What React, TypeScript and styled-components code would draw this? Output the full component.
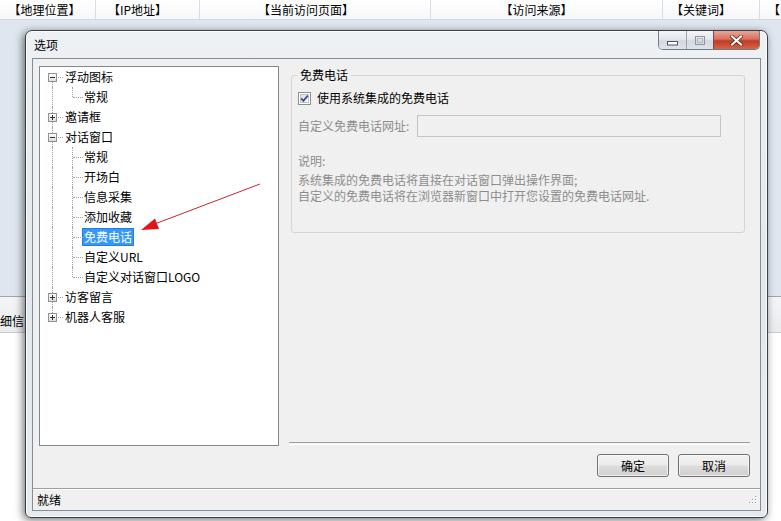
import React from 'react';
import styled, { createGlobalStyle } from 'styled-components';

const GlobalStyle = createGlobalStyle`
  html, body { margin: 0; padding: 0; }
  body {
    font-family: "Noto Sans CJK SC", "Noto Sans", sans-serif;
    font-size: 12px;
    color: #000;
    overflow: hidden;
  }
`;

const Page = styled.div`
  position: relative;
  width: 781px;
  height: 521px;
  overflow: hidden;
  display: flex;
  flex-direction: column;
  background: #fff;
`;

// ---- application behind the dialog ----
const HeaderRow = styled.div`
  display: grid;
  grid-template-columns: 96px 104px 231px 232px 97px 1fr;
  height: 20px;
  flex: none;
  background: linear-gradient(#ffffff, #f6f7f9);
  border-bottom: 1px solid #d3d8df;
  box-sizing: border-box;
`;

const HeaderCell = styled.div<{ $pr: number }>`
  line-height: 19px;
  text-align: center;
  white-space: nowrap;
  overflow: hidden;
  padding-right: ${(p) => p.$pr}px;
  border-right: 1px solid #dadde2;
`;

const LastHeaderCell = styled(HeaderCell)`
  text-align: left;
  padding-left: 8px;
  border-right: none;
`;

const ListArea = styled.div`
  height: 276px;
  flex: none;
  background: #dfe6ef;
  border-bottom: 1px solid #9ea6b0;
`;

const TabStrip = styled.div`
  height: 35px;
  flex: none;
  background: linear-gradient(#f4f5f7, #e9ebee);
  border-bottom: 1px solid #c9ccd1;
  display: flex;
  align-items: flex-end;
`;

const TabLabel = styled.div`
  line-height: 20px;
  padding: 0 2px 1px 0;
  border-right: 1px solid #b7bcc3;
`;

// ---- dialog ----
const Frame = styled.div`
  position: absolute;
  left: 25px;
  top: 30px;
  width: 743px;
  height: 488px;
  box-sizing: border-box;
  border: 1px solid #3a3d42;
  border-radius: 7px 7px 6px 6px;
  background: linear-gradient(180deg, #eef1f4 0%, #e3e8ed 45%, #e6eaee 100%);
  box-shadow: -2px 2px 9px rgba(0, 0, 0, 0.55), inset 0 0 0 1px rgba(255, 255, 255, 0.8);
  display: flex;
  flex-direction: column;
  padding: 0 6px 6px 6px;
`;

const TitleBar = styled.div`
  height: 27px;
  flex: none;
  display: flex;
  align-items: flex-start;
`;

const Title = styled.div`
  line-height: 16px;
  padding-top: 6px;
  padding-left: 2px;
  flex: 1;
`;

const CaptionGroup = styled.div`
  display: flex;
  height: 18px;
  margin-right: 1px;
  border: 1px solid #6f7b89;
  border-top: none;
  border-radius: 0 0 5px 5px;
  overflow: hidden;
`;

const CaptionButton = styled.div<{ $w: number; $close?: boolean }>`
  width: ${(p) => p.$w}px;
  display: flex;
  align-items: center;
  justify-content: center;
  box-sizing: border-box;
  border-left: ${(p) => (p.$close ? '1px solid #7d4a44' : '1px solid #9aa4ae')};
  &:first-child { border-left: none; }
  background: ${(p) =>
    p.$close
      ? 'linear-gradient(#eaa595 0%, #d7705f 45%, #c23a24 55%, #d5644a 100%)'
      : 'linear-gradient(#f4f6f8 0%, #e3e7ec 45%, #d3d9e0 55%, #dfe4ea 100%)'};
`;

const Client = styled.div`
  flex: 1;
  display: flex;
  flex-direction: column;
  border: 1px solid #848e99;
  background: #f0f0f0;
`;

const Body = styled.div`
  flex: 1;
  display: flex;
  padding: 7px 10px 0 6px;
`;

// ---- tree ----
const Tree = styled.div`
  width: 240px;
  height: 380px;
  flex: none;
  box-sizing: border-box;
  border: 1px solid #828790;
  background: #fff;
  padding-left: 3px;
`;

const Row = styled.div`
  display: flex;
  align-items: center;
  height: 20px;
`;

type VLine = 'full' | 'top' | 'bottom' | 'none';

const Cell = styled.span<{ $v: VLine; $h?: boolean }>`
  position: relative;
  width: 20px;
  height: 20px;
  flex: none;
  &::before {
    content: '';
    position: absolute;
    left: 9px;
    top: ${(p) => (p.$v === 'bottom' ? '10px' : '0')};
    height: ${(p) => (p.$v === 'full' ? '20px' : p.$v === 'none' ? '0' : '10px')};
    border-left: 1px dotted #a0a0a0;
  }
  &::after {
    content: '';
    position: absolute;
    left: 10px;
    top: 10px;
    width: ${(p) => (p.$h ? '10px' : '0')};
    border-top: 1px dotted #a0a0a0;
  }
`;

const Expander = styled.span`
  position: absolute;
  left: 5px;
  top: 6px;
  width: 9px;
  height: 9px;
  box-sizing: border-box;
  border: 1px solid #919191;
  background: linear-gradient(#ffffff, #dcdcdc);
  z-index: 1;
`;

const Label = styled.span<{ $selected?: boolean; $child?: boolean }>`
  line-height: 16px;
  padding: 0 1px;
  margin-left: ${(p) => (p.$child ? '-1px' : '0')};
  border: 1px solid ${(p) => (p.$selected ? '#2b7bd6' : 'transparent')};
  background: ${(p) => (p.$selected ? '#3399ff' : 'transparent')};
  color: ${(p) => (p.$selected ? '#fff' : '#000')};
  white-space: nowrap;
`;

// ---- right side ----
const RightCol = styled.div`
  width: 461px;
  margin-left: 10px;
  display: flex;
  flex-direction: column;
`;

const GroupBox = styled.div`
  position: relative;
  margin: 9px 0 0 2px;
  width: 454px;
  height: 158px;
  box-sizing: border-box;
  border: 1px solid #d5d5d5;
  border-radius: 3px;
  padding: 12px 6px 0 6px;
`;

const Legend = styled.span`
  position: absolute;
  top: -9px;
  left: 5px;
  padding: 0 3px;
  line-height: 16px;
  background: #f0f0f0;
`;

const CheckRow = styled.div`
  display: flex;
  align-items: center;
  gap: 6px;
  height: 20px;
  line-height: 16px;
`;

const FieldRow = styled.div`
  display: flex;
  align-items: center;
  margin-top: 7px;
  height: 22px;
`;

const FieldLabel = styled.span`
  width: 119px;
  flex: none;
  color: #8d8d8d;
  line-height: 16px;
`;

const TextBox = styled.div`
  width: 304px;
  height: 22px;
  box-sizing: border-box;
  border: 1px solid #c2c4c8;
  background: #f0f0f0;
`;

const Note = styled.div`
  margin-top: 16px;
  color: #8d8d8d;
  line-height: 16px;
`;

const NoteTitle = styled.div`
  margin-bottom: 3px;
`;

const Separator = styled.div`
  margin-top: auto;
  height: 1px;
  border-top: 1px solid #a0a0a0;
  border-bottom: 1px solid #ffffff;
`;

const ButtonRow = styled.div`
  display: flex;
  justify-content: flex-end;
  gap: 9px;
  margin: 9px 0 11px 0;
`;

const Button = styled.div`
  width: 72px;
  height: 23px;
  box-sizing: border-box;
  border: 1px solid #707070;
  border-radius: 3px;
  background: linear-gradient(#f2f2f2 0%, #ebebeb 48%, #dddddd 52%, #cfcfcf 100%);
  box-shadow: inset 0 0 0 1px rgba(255, 255, 255, 0.7);
  display: flex;
  align-items: center;
  justify-content: center;
  line-height: 16px;
`;

const StatusBar = styled.div`
  height: 22px;
  flex: none;
  box-sizing: border-box;
  border-top: 1px solid #a0a0a0;
  box-shadow: inset 0 1px 0 #ffffff;
  display: flex;
  align-items: center;
  justify-content: space-between;
  padding: 0 2px 0 4px;
  line-height: 16px;
`;

const Overlay = styled.svg`
  position: absolute;
  left: 0;
  top: 0;
  pointer-events: none;
`;

type Node = { label: string; children?: string[]; expanded?: boolean };

const treeData: Node[] = [
  { label: '浮动图标', children: ['常规'], expanded: true },
  { label: '邀请框', children: ['常规'] },
  {
    label: '对话窗口',
    expanded: true,
    children: ['常规', '开场白', '信息采集', '添加收藏', '免费电话', '自定义URL', '自定义对话窗口LOGO'],
  },
  { label: '访客留言', children: ['常规'] },
  { label: '机器人客服', children: ['常规'] },
];

const SELECTED = '免费电话';

const ExpanderIcon: React.FC<{ open: boolean }> = ({ open }) => (
  <Expander>
    <svg width="7" height="7" viewBox="0 0 7 7" style={{ display: 'block' }}>
      <line x1="1" y1="3.5" x2="6" y2="3.5" stroke="#333" strokeWidth="1" />
      {!open && <line x1="3.5" y1="1" x2="3.5" y2="6" stroke="#333" strokeWidth="1" />}
    </svg>
  </Expander>
);

const TreeView: React.FC = () => {
  const rows: React.ReactNode[] = [];
  treeData.forEach((node, i) => {
    const first = i === 0;
    const last = i === treeData.length - 1;
    const v: VLine = first ? 'bottom' : last ? 'top' : 'full';
    rows.push(
      <Row key={node.label}>
        <Cell $v={v} $h>
          <ExpanderIcon open={!!node.expanded} />
        </Cell>
        <Label>{node.label}</Label>
      </Row>
    );
    if (node.expanded && node.children) {
      node.children.forEach((child, j) => {
        const lastChild = j === node.children!.length - 1;
        rows.push(
          <Row key={node.label + child}>
            <Cell $v={last ? 'none' : 'full'} />
            <Cell $v={lastChild ? 'top' : 'full'} $h />
            <Label $child $selected={child === SELECTED}>
              {child}
            </Label>
          </Row>
        );
      });
    }
  });
  return <Tree>{rows}</Tree>;
};

const CheckBox: React.FC = () => (
  <svg width="13" height="13" viewBox="0 0 13 13">
    <defs>
      <linearGradient id="cbg" x1="0" y1="0" x2="1" y2="1">
        <stop offset="0" stopColor="#dcdcdc" />
        <stop offset="1" stopColor="#ffffff" />
      </linearGradient>
    </defs>
    <rect x="0.5" y="0.5" width="12" height="12" fill="#fff" stroke="#8e8f8f" />
    <rect x="2.5" y="2.5" width="8" height="8" fill="url(#cbg)" stroke="#c4c4c4" />
    <path d="M3.2 6.4 L5.4 8.8 L9.8 3.6" fill="none" stroke="#3c4f8c" strokeWidth="1.8" />
  </svg>
);

const Grip: React.FC = () => (
  <svg width="10" height="10" viewBox="0 0 10 10">
    {[
      [8, 2],
      [5, 5],
      [8, 5],
      [2, 8],
      [5, 8],
      [8, 8],
    ].map(([x, y]) => (
      <g key={`${x}-${y}`}>
        <rect x={x} y={y} width="1" height="1" fill="#fff" />
        <rect x={x - 1} y={y - 1} width="1" height="1" fill="#9aa0a6" />
      </g>
    ))}
  </svg>
);

const App: React.FC = () => (
  <Page>
    <GlobalStyle />
    <HeaderRow>
      <HeaderCell $pr={6}>【地理位置】</HeaderCell>
      <HeaderCell $pr={20}>【IP地址】</HeaderCell>
      <HeaderCell $pr={18}>【当前访问页面】</HeaderCell>
      <HeaderCell $pr={20}>【访问来源】</HeaderCell>
      <HeaderCell $pr={20}>【关键词】</HeaderCell>
      <LastHeaderCell $pr={0}>【</LastHeaderCell>
    </HeaderRow>
    <ListArea />
    <TabStrip>
      <TabLabel>细信</TabLabel>
    </TabStrip>

    <Frame>
      <TitleBar>
        <Title>选项</Title>
        <CaptionGroup>
          <CaptionButton $w={27}>
            <svg width="11" height="6" viewBox="0 0 11 6" style={{ marginTop: 5 }}>
              <rect x="0.5" y="1.5" width="10" height="3.5" fill="#fdfdfd" stroke="#4e5660" />
            </svg>
          </CaptionButton>
          <CaptionButton $w={27}>
            <svg width="10" height="9" viewBox="0 0 10 9">
              <rect x="0.5" y="0.5" width="9" height="8" fill="none" stroke="#8d96a0" />
              <rect x="2.5" y="2.5" width="5" height="4" fill="none" stroke="#b4bac1" />
            </svg>
          </CaptionButton>
          <CaptionButton $w={46} $close>
            <svg width="13" height="11" viewBox="0 0 13 11">
              <path d="M2 1.5 L11 9.5 M11 1.5 L2 9.5" stroke="#5b2a22" strokeWidth="3.6" strokeLinecap="square" />
              <path d="M2 1.5 L11 9.5 M11 1.5 L2 9.5" stroke="#ffffff" strokeWidth="2" strokeLinecap="square" />
            </svg>
          </CaptionButton>
        </CaptionGroup>
      </TitleBar>

      <Client>
        <Body>
          <TreeView />
          <RightCol>
            <GroupBox>
              <Legend>免费电话</Legend>
              <CheckRow>
                <CheckBox />
                <span>使用系统集成的免费电话</span>
              </CheckRow>
              <FieldRow>
                <FieldLabel>自定义免费电话网址:</FieldLabel>
                <TextBox />
              </FieldRow>
              <Note>
                <NoteTitle>说明:</NoteTitle>
                <div>系统集成的免费电话将直接在对话窗口弹出操作界面;</div>
                <div>自定义的免费电话将在浏览器新窗口中打开您设置的免费电话网址.</div>
              </Note>
            </GroupBox>
            <Separator />
            <ButtonRow>
              <Button>确定</Button>
              <Button>取消</Button>
            </ButtonRow>
          </RightCol>
        </Body>
        <StatusBar>
          <span>就绪</span>
          <Grip />
        </StatusBar>
      </Client>
    </Frame>

    <Overlay width="781" height="521" viewBox="0 0 781 521">
      <line x1="260" y1="184" x2="152" y2="225" stroke="#c8262b" strokeWidth="1" />
      <polygon points="141,230 155,218.5 159,229" fill="#e0141b" />
    </Overlay>
  </Page>
);

export default App;
